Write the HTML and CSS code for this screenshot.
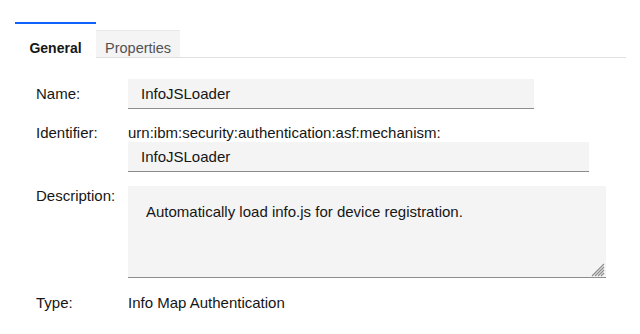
FILE: index.html
```html
<!DOCTYPE html>
<html lang="en">
<head>
  <meta charset="UTF-8" />
  <title>Mechanism - General</title>
  <link rel="stylesheet" href="styles.css">
</head>
<body>
  <div class="tabs">
    <div class="tab tab-selected">General</div>
    <div class="tab">Properties</div>
    <div class="tab-fill"></div>
  </div>

  <div class="form">
    <label class="form-label label-mid" for="name">Name:</label>
    <div class="form-field">
      <input id="name" class="text-input input-name" type="text" value="InfoJSLoader" readonly>
    </div>

    <label class="form-label" for="identifier">Identifier:</label>
    <div class="form-field">
      <div class="prefix">urn:ibm:security:authentication:asf:mechanism:</div>
      <input id="identifier" class="text-input input-ident" type="text" value="InfoJSLoader" readonly>
    </div>

    <label class="form-label label-desc" for="description">Description:</label>
    <div class="form-field">
      <div class="area-wrap">
        <textarea id="description" class="text-area" readonly>Automatically load info.js for device registration.</textarea>
        <!-- resize grip -->
        <svg class="grip" width="14" height="14" viewBox="0 0 14 14">
          <path d="M13 1 L1 13 M13 4 L4 13 M13 7 L7 13 M13 10 L10 13" stroke="#8d8d8d" stroke-width="1.2" fill="none"/>
        </svg>
      </div>
    </div>

    <div class="form-label label-type">Type:</div>
    <div class="form-field type-value">Info Map Authentication</div>
  </div>
</body>
</html>
```

FILE: styles.css
```css
body {
  margin: 0;
  padding: 22px 14px 0 15px;
  background: #fff;
  color: #161616;
  font-family: "Liberation Sans", Arial, sans-serif;
  font-size: 15px;
}

.tabs {
  display: flex;
  align-items: flex-end;
  font-size: 14.5px;
}

.tab {
  height: 18px;
  line-height: 18px;
  padding: 8px 9px 0;
  background: #f4f4f4;
  color: #525252;
  border-top: 1px solid #e8e8e8;
  border-bottom: 1px solid #e0e0e0;
}

.tab-selected {
  width: 81px;
  padding: 15px 0 0;
  text-align: center;
  background: #fff;
  color: #161616;
  font-weight: bold;
  font-size: 14px;
  border-top: 2px solid #0f62fe;
  border-bottom: 1px solid transparent;
}

.tab-fill {
  flex: 1;
  border-bottom: 1px solid #e0e0e0;
}

.form {
  display: grid;
  grid-template-columns: 92px auto;
  row-gap: 15px;
  padding: 21px 0 0 21px;
}

.form-label {
  line-height: 18px;
}

.label-mid {
  line-height: 30px;
}

.form-field {
  display: flex;
  flex-direction: column;
  align-items: flex-start;
}

.prefix {
  line-height: 18px;
}

.text-input {
  box-sizing: border-box;
  height: 30px;
  margin: 0;
  padding: 0 13px;
  border: none;
  border-bottom: 1px solid #8d8d8d;
  background: #f4f4f4;
  color: #161616;
  font-family: inherit;
  font-size: 15px;
  outline: none;
}

.input-name {
  width: 406px;
}

.input-ident {
  width: 461px;
}

.area-wrap {
  position: relative;
  margin-top: -1px;
}

.text-area {
  display: block;
  box-sizing: border-box;
  width: 478px;
  height: 92px;
  margin: 0;
  padding: 17px 18px;
  border: none;
  border-bottom: 1px solid #8d8d8d;
  background: #f4f4f4;
  color: #161616;
  font-family: inherit;
  font-size: 15px;
  line-height: 18px;
  resize: none;
  outline: none;
}

.grip {
  position: absolute;
  right: 1px;
  bottom: 1px;
}

.label-type,
.type-value {
  margin-top: 1px;
  line-height: 18px;
}
```
